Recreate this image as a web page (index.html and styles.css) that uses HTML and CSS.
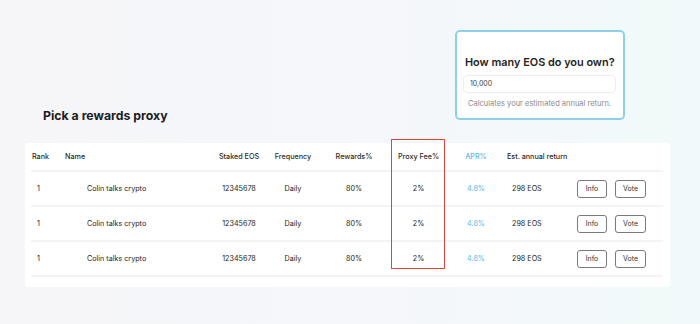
FILE: index.html
```html
<!DOCTYPE html>
<html lang="en">
<head>
<meta charset="utf-8">
<title>Pick a rewards proxy</title>
<link rel="stylesheet" href="styles.css">
</head>
<body>
<main class="page">
  <section class="top">
    <h1 class="heading">Pick a rewards proxy</h1>
    <div class="calc">
      <h2 class="calc-title">How many EOS do you own?</h2>
      <div class="calc-input">10,000</div>
      <p class="calc-help">Calculates your estimated annual return.</p>
    </div>
  </section>
  <section class="table-card">
    <div class="row head">
      <div class="c rank">Rank</div>
      <div class="c name">Name</div>
      <div class="c ctr">Staked EOS</div>
      <div class="c ctr">Frequency</div>
      <div class="c ctr">Rewards%</div>
      <div class="c ctr">Proxy Fee%</div>
      <div class="c ctr apr">APR%</div>
      <div class="c est">Est. annual return</div>
      <div class="c"></div>
    </div>
    <div class="row">
      <div class="c rank">1</div>
      <div class="c name">Colin talks crypto</div>
      <div class="c ctr">12345678</div>
      <div class="c ctr">Daily</div>
      <div class="c ctr">80%</div>
      <div class="c ctr">2%</div>
      <div class="c ctr apr">4.8%</div>
      <div class="c est">298 EOS</div>
      <div class="c actions"><button class="btn">Info</button><button class="btn">Vote</button></div>
    </div>
    <div class="row">
      <div class="c rank">1</div>
      <div class="c name">Colin talks crypto</div>
      <div class="c ctr">12345678</div>
      <div class="c ctr">Daily</div>
      <div class="c ctr">80%</div>
      <div class="c ctr">2%</div>
      <div class="c ctr apr">4.8%</div>
      <div class="c est">298 EOS</div>
      <div class="c actions"><button class="btn">Info</button><button class="btn">Vote</button></div>
    </div>
    <div class="row last">
      <div class="c rank">1</div>
      <div class="c name">Colin talks crypto</div>
      <div class="c ctr">12345678</div>
      <div class="c ctr">Daily</div>
      <div class="c ctr">80%</div>
      <div class="c ctr">2%</div>
      <div class="c ctr apr">4.8%</div>
      <div class="c est">298 EOS</div>
      <div class="c actions"><button class="btn">Info</button><button class="btn">Vote</button></div>
    </div>
    <div class="highlight"></div>
  </section>
</main>
</body>
</html>
```
FILE: styles.css
```css
* { box-sizing: border-box; }
html, body { margin: 0; padding: 0; }
body {
  width: 700px;
  height: 324px;
  overflow: hidden;
  background: linear-gradient(90deg, #f6f6f9 0%, #f5f7fa 55%, #f1fafa 100%);
  font-family: Inter, "Noto Sans", sans-serif;
  color: #222;
}
.page {
  padding: 30px 30px 0 25px;
}
.top {
  display: flex;
  justify-content: space-between;
  align-items: flex-end;
  padding: 0 45px 0 18px;
  height: 90px;
}
.heading {
  margin: 0 0 -5px 0;
  font-size: 12.3px;
  line-height: 18px;
  font-weight: 700;
  color: #1d1d1f;
}
.calc {
  width: 170px;
  height: 90px;
  background: #fff;
  border: 2px solid #8dd0ea;
  border-radius: 5px;
  padding: 21px 7px 0 6px;
}
.calc-title {
  margin: 0 0 4px 2px;
  font-size: 10.9px;
  line-height: 18px;
  font-weight: 600;
  color: #1f1f1f;
  white-space: nowrap;
}
.calc-input {
  height: 18px;
  border: 1px solid #ececee;
  border-radius: 4px;
  font-size: 7px;
  line-height: 16px;
  padding-left: 6px;
  color: #444;
}
.calc-help {
  margin: 5px 0 0 0;
  font-size: 7.5px;
  line-height: 12px;
  color: #8a8a8f;
  text-align: center;
}
.table-card {
  position: relative;
  margin-top: 23px;
  width: 645px;
  height: 144px;
  background: #fff;
  border-radius: 3px;
  padding: 0 7px 0 6px;
}
.row {
  display: grid;
  grid-template-columns: 29px 150px 58px 50px 72px 57px 58px 64px 1fr;
  align-items: center;
  height: 35px;
  border-bottom: 2px solid #f3f3f6;
  font-size: 7.2px;
  color: #222;
}
.row.head {
  height: 29px;
  font-weight: 500;
  color: #2a2a2a;
}
.c { white-space: nowrap; }
.ctr { text-align: center; }
.rank { padding-left: 6px; }
.head .rank { padding-left: 1px; }
.name { padding-left: 27px; }
.head .name { padding-left: 5px; }
.est { padding-left: 7px; }
.head .est { padding-left: 2px; }
.apr { color: #5db6e3; }
.actions {
  display: flex;
  gap: 8px;
  padding-left: 8px;
}
.btn {
  width: 30px;
  height: 18px;
  padding: 0;
  background: #fff;
  border: 1px solid #7a7a7a;
  border-radius: 3px;
  font-family: inherit;
  font-size: 7px;
  color: #333;
}
.btn + .btn { width: 31px; }
.highlight {
  position: absolute;
  left: 366px;
  top: -4px;
  width: 54px;
  height: 130px;
  border: 1.5px solid #e2443c;
}
```
